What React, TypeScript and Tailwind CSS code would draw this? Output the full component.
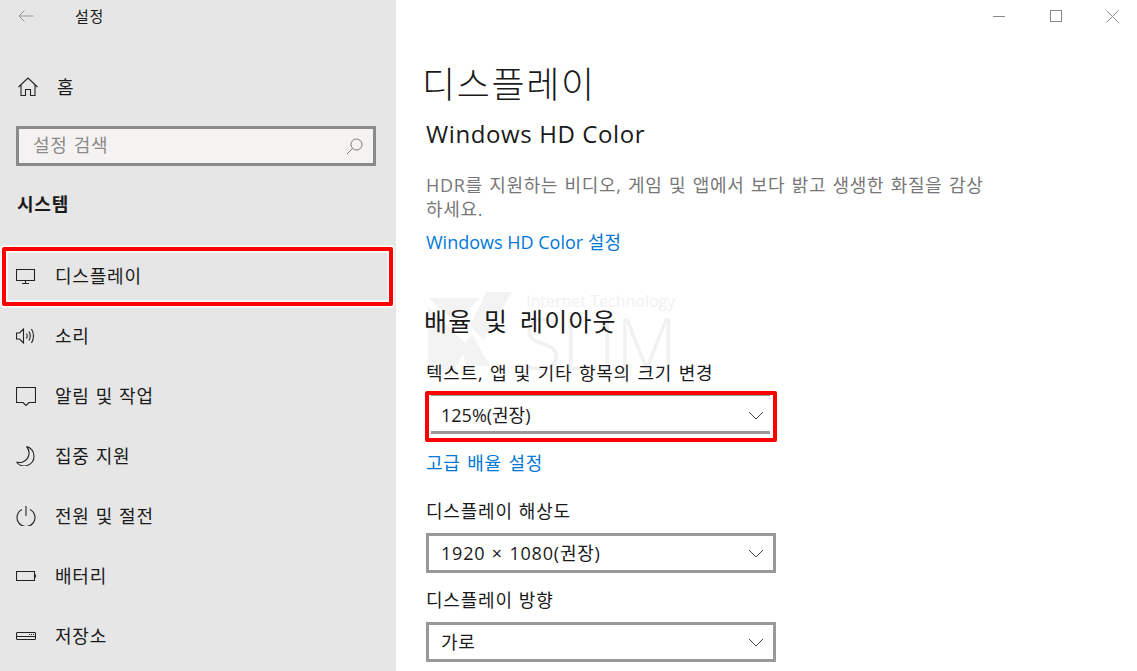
import * as React from "react";

const font = { fontFamily: '"Open Sans", "Noto Sans CJK KR", sans-serif' };

const iconProps = {
  width: 20,
  height: 20,
  viewBox: "0 0 20 20",
  fill: "none",
  stroke: "#222",
  strokeWidth: 1.1,
};

const MonitorIcon = () => (
  <svg {...iconProps}>
    <path d="M0.5 3.5h18v11h-18zM9.5 14.5v2.5M6 17.5h7" />
  </svg>
);

const SoundIcon = () => (
  <svg {...iconProps}>
    <path d="M0.5 7h3l4-4v14l-4-4h-3zM10.5 7.5q1.5 2.5 0 5M13 5.5q2.5 4.5 0 9M15.5 3q4 7 0 14" />
  </svg>
);

const NotifyIcon = () => (
  <svg {...iconProps}>
    <path d="M0.5 1.5h19v15h-6.5l-3 3-3-3h-6.5z" />
  </svg>
);

const MoonIcon = () => (
  <svg {...iconProps}>
    <path d="M10.5 0.5a9.5 9.5 0 0 1-10 15.5a9.5 9.5 0 0 0 10-15.5zM0.5 16a9.7 9.7 0 0 0 17.5-6a9.7 9.7 0 0 0-7.5-9.5" />
  </svg>
);

const PowerIcon = () => (
  <svg {...iconProps}>
    <path d="M6 3.5a9 9 0 1 0 8 0M10 0v10" />
  </svg>
);

const BatteryIcon = () => (
  <svg {...iconProps}>
    <path d="M0.5 5.5h18v9h-18zM19.5 8.5v3" />
  </svg>
);

const StorageIcon = () => (
  <svg {...iconProps}>
    <path d="M1.5 6.5h17q1 0 1 1v5q0 1-1 1h-17q-1 0-1-1v-5q0-1 1-1zM0.5 10.5h19M13 8.5h1M15 8.5h1M17 8.5h1" />
  </svg>
);

const navItems = [
  { label: "소리", icon: <SoundIcon /> },
  { label: "알림 및 작업", icon: <NotifyIcon /> },
  { label: "집중 지원", icon: <MoonIcon /> },
  { label: "전원 및 절전", icon: <PowerIcon /> },
  { label: "배터리", icon: <BatteryIcon /> },
  { label: "저장소", icon: <StorageIcon /> },
];

const Chevron = () => (
  <svg width="16" height="9" viewBox="0 0 16 9" fill="none" stroke="#444" strokeWidth="1">
    <path d="M1 1l7 7 7-7" />
  </svg>
);

const Select = ({ value }: { value: string }) => (
  <div className="flex h-[40px] w-[350px] items-center justify-between border-[3px] border-[#999] pl-[12px] pr-[9px] text-[18px] tracking-[0.8px] text-[#1a1a1a] [word-spacing:1px]">
    <span>{value}</span>
    <Chevron />
  </div>
);

const Sidebar = () => (
  <aside className="flex h-[671px] w-[396px] shrink-0 flex-col bg-[#e6e6e6] text-[18px] tracking-[0.8px] text-[#1a1a1a] [word-spacing:0.5px]">
    <div className="flex h-[32px] items-center">
      <svg className="ml-[18px]" width="16" height="12" viewBox="0 0 16 12" fill="none" stroke="#999" strokeWidth="1">
        <path d="M15.5 6H1M6.5 0.5L1 6l5.5 5.5" />
      </svg>
      <span className="ml-[41px] text-[15px]">설정</span>
    </div>
    <div className="mt-[40px] flex h-[30px] items-center pl-[18px]">
      <svg {...iconProps} className="shrink-0">
        <path d="M0.5 10L10 1l9.5 9M3 8v10.5h4.5v-6h5v6H17V8" />
      </svg>
      <span className="ml-[19px]">홈</span>
    </div>
    <div className="ml-[16px] mt-[24px] flex h-[40px] w-[360px] items-center justify-between border-[3px] border-[#8a8a8a] bg-[#f4f3f1] pl-[14px] pr-[10px] text-[#8a8a8a]">
      <span className="-mt-[2px]">설정 검색</span>
      <svg width="17" height="17" viewBox="0 0 17 17" fill="none" stroke="#777" strokeWidth="1">
        <circle cx="10.5" cy="6.5" r="5.5" />
        <path d="M6.5 10.5L1 16" />
      </svg>
    </div>
    <div className="mt-[25px] h-[26px] pl-[17px] font-bold leading-[26px]">시스템</div>
    <div className="relative mt-[29px] flex h-[60px] items-center pl-[16px]">
      <MonitorIcon />
      <span className="ml-[19px]">디스플레이</span>
      <div className="absolute left-[2px] top-[1px] h-[59px] w-[391px] rounded-[2px] border-[4px] border-[#f00] shadow-[0_0_0_1.5px_#fff,inset_0_0_0_1.5px_#fff]" />
    </div>
    {navItems.map((item) => (
      <div key={item.label} className="flex h-[60px] items-center pl-[16px]">
        {item.icon}
        <span className="ml-[19px]">{item.label}</span>
      </div>
    ))}
  </aside>
);

const WindowControls = () => (
  <div className="absolute -right-[4px] top-0 flex h-[32px] items-center">
    <div className="flex w-[57px] justify-center">
      <div className="h-px w-[12px] bg-[#8a8a8a]" />
    </div>
    <div className="flex w-[57px] justify-center">
      <div className="size-[12px] border border-[#8a8a8a]" />
    </div>
    <div className="flex w-[57px] justify-center">
      <svg width="13" height="13" viewBox="0 0 13 13" fill="none" stroke="#8a8a8a" strokeWidth="1">
        <path d="M0.5 0.5l12 12M12.5 0.5l-12 12" />
      </svg>
    </div>
  </div>
);

// faint site logo over the content
const Watermark = () => (
  <div className="absolute left-[30px] top-[290px] h-[90px] w-[250px] text-[#f1f1f1]">
    <svg className="absolute left-0 top-0" width="95" height="85" viewBox="0 0 95 85" fill="#f3f3f3">
      <path d="M2 8h52L30 32zM60 2h26L58 50 44 36zM2 16l40 40-14 24H2zM36 56l10-12 18 32H40z" />
    </svg>
    <span className="absolute left-[100px] top-[2px] text-[16px] leading-[18px]">Internet Technology</span>
    <span className="absolute left-[97px] top-[18px] text-[71px] font-light leading-[70px]">SLIM</span>
  </div>
);

export default function App() {
  return (
    <div className="flex h-[671px] w-[1137px] overflow-hidden bg-white" style={font}>
      <Sidebar />
      <main className="relative flex-1 overflow-hidden pl-[30px]">
        <WindowControls />
        <Watermark />
        <h1 className="relative -ml-[4px] mt-[59px] h-[52px] text-[36px] font-light leading-[52px] tracking-[1.6px] text-[#1a1a1a]">
          디스플레이
        </h1>
        <h2 className="relative mt-[6px] h-[34px] text-[24px] leading-[34px] tracking-[0.6px] text-[#1a1a1a]">
          Windows HD Color
        </h2>
        <p className="mt-[22px] text-[18px] leading-[24px] tracking-[0.7px] text-[#777] [word-spacing:1px]">
          HDR를 지원하는 비디오, 게임 및 앱에서 보다 밝고 생생한 화질을 감상
          <br />
          하세요.
        </p>
        <a className="mt-[9px] block h-[24px] text-[18px] leading-[24px] text-[#0078d7]">Windows HD Color 설정</a>
        <h2 className="relative -ml-[2px] mt-[49px] h-[36px] text-[25px] leading-[36px] tracking-[1.2px] text-[#1a1a1a] [word-spacing:4px]">
          배율 및 레이아웃
        </h2>
        <div className="relative mt-[22px] h-[24px] text-[18px] leading-[24px] tracking-[0.8px] text-[#1a1a1a] [word-spacing:1px]">
          텍스트, 앱 및 기타 항목의 크기 변경
        </div>
        <div className="relative mt-[10px]">
          <div className="ml-[5px] mt-[2px] flex h-[39px] w-[339px] items-center justify-between border-b-[3px] border-t border-[#999] pl-[10px] pr-[6px] pt-[3px] text-[18px] text-[#1a1a1a]">
            <span>125%(권장)</span>
            <Chevron />
          </div>
          <div className="absolute -left-[1px] -top-[4px] h-[51px] w-[352px] rounded-[2px] border-[4px] border-[#f00]" />
        </div>
        <a className="mt-[17px] block h-[24px] text-[18px] leading-[24px] tracking-[0.8px] text-[#0078d7] [word-spacing:1px]">
          고급 배율 설정
        </a>
        <div className="mt-[24px] h-[24px] text-[18px] leading-[24px] tracking-[0.8px] text-[#1a1a1a] [word-spacing:0.5px]">
          디스플레이 해상도
        </div>
        <div className="mt-[10px]">
          <Select value="1920 × 1080(권장)" />
        </div>
        <div className="mt-[15px] h-[24px] text-[18px] leading-[24px] tracking-[0.8px] text-[#1a1a1a] [word-spacing:0.5px]">
          디스플레이 방향
        </div>
        <div className="mt-[10px]">
          <Select value="가로" />
        </div>
      </main>
    </div>
  );
}
